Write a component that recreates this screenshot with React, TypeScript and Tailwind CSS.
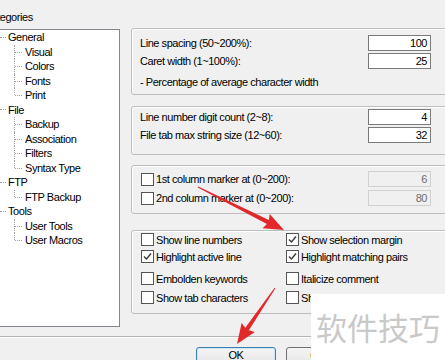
import React from "react";

type Root = { label: string; children: string[] };

const tree: Root[] = [
  { label: "General", children: ["Visual", "Colors", "Fonts", "Print"] },
  { label: "File", children: ["Backup", "Association", "Filters", "Syntax Type"] },
  { label: "FTP", children: ["FTP Backup"] },
  { label: "Tools", children: ["User Tools", "User Macros"] },
];

function arrowPoints(x0: number, y0: number, x1: number, y1: number, h = 18, hw = 8, w1 = 2.2, w0 = 0.5) {
  const dx = x1 - x0;
  const dy = y1 - y0;
  const L = Math.hypot(dx, dy);
  const ux = dx / L;
  const uy = dy / L;
  const nx = -uy;
  const ny = ux;
  const p = (a: number, b: number) => `${x0 + ux * a + nx * b},${y0 + uy * a + ny * b}`;
  return [p(0, -w0), p(L - h, -w1), p(L - h - 2, -hw), p(L, 0), p(L - h - 2, hw), p(L - h, w1), p(0, w0)].join(" ");
}

function CheckBox({ checked }: { checked?: boolean }) {
  return (
    <span className="flex h-[13px] w-[13px] shrink-0 items-center justify-center border border-[#555555] bg-white">
      {checked && (
        <svg width="11" height="11" viewBox="0 0 11 11">
          <polyline points="2,5.5 4.5,8 9,2.5" fill="none" stroke="#3a3a3a" strokeWidth="1.4" />
        </svg>
      )}
    </span>
  );
}

function Field({ value, disabled }: { value: string; disabled?: boolean }) {
  return (
    <div
      className={
        disabled
          ? "flex h-[16px] w-[63px] items-center justify-end border border-[#d0d0d0] bg-[#f0f0f0] pr-[3px] text-[#6d6d6d]"
          : "flex h-[16px] w-[63px] items-center justify-end border border-[#7a7a7a] bg-white pr-[3px] text-black"
      }
    >
      {value}
    </div>
  );
}

function NumRow({ label, value }: { label: string; value: string }) {
  return (
    <div className="flex h-[18px] items-center">
      <div className="w-[228px] whitespace-nowrap">{label}</div>
      <Field value={value} />
    </div>
  );
}

function CheckItem({ label, checked }: { label: string; checked?: boolean }) {
  return (
    <div className="flex h-[17px] items-center gap-[2px] whitespace-nowrap">
      <CheckBox checked={checked} />
      <span>{label}</span>
    </div>
  );
}

const panel = "rounded-[3px] border border-[#bdbdbd] shadow-[inset_1px_1px_0_#ffffff]";

export default function App() {
  return (
    <div className="relative h-[360px] w-[445px] overflow-hidden bg-[#f0f0f0] font-['Liberation_Sans',Arial,sans-serif] text-[11px] leading-[14px] tracking-[-0.45px] text-black">
      <div className="flex h-[336px]">
        {/* left column */}
        <div className="ml-[-30px] flex w-[150px] shrink-0 flex-col">
          <div className="mt-[10px] h-[14px] pl-[14px]">Categories</div>
          <div className="mt-[5px] h-[298px] border border-[#828790] bg-white">
            <div className="ml-[29px] flex flex-col">
              {tree.map((r) => (
                <div key={r.label} className="flex flex-col">
                  <div className="flex h-[14.5px] items-center">
                    <span className="ml-[-9px] h-[9px] w-[9px] shrink-0 border border-[#a0a0a0] bg-white" />
                    <span className="w-[6px] shrink-0 border-t border-dotted border-[#a0a0a0]" />
                    <span className="ml-[2px] whitespace-nowrap">{r.label}</span>
                  </div>
                  {r.children.map((c, i) => {
                    const last = i === r.children.length - 1;
                    return (
                      <div key={c} className="flex h-[14.5px] items-center">
                        <div className="relative ml-[14px] h-full w-[9px] shrink-0">
                          <span
                            className={
                              last
                                ? "absolute left-0 top-0 h-1/2 border-l border-dotted border-[#a0a0a0]"
                                : "absolute left-0 top-0 h-full border-l border-dotted border-[#a0a0a0]"
                            }
                          />
                          <span className="absolute left-[1px] top-1/2 w-[7px] border-t border-dotted border-[#a0a0a0]" />
                        </div>
                        <span className="ml-[2px] whitespace-nowrap">{c}</span>
                      </div>
                    );
                  })}
                </div>
              ))}
            </div>
          </div>
        </div>

        {/* right column */}
        <div className="ml-[11px] flex w-[330px] shrink-0 flex-col pt-[28px]">
          <div className={`${panel} h-[67px] pl-[8px] pt-[5px]`}>
            <NumRow label="Line spacing (50~200%):" value="100" />
            <NumRow label="Caret width (1~100%):" value="25" />
            <div className="mt-[3px] flex h-[18px] items-center">- Percentage of average character width</div>
          </div>
          <div className={`${panel} mt-[11px] h-[49px] pl-[8px] pt-[1px]`}>
            <NumRow label="Line number digit count (2~8):" value="4" />
            <NumRow label="File tab max string size (12~60):" value="32" />
          </div>
          <div className={`${panel} mt-[10px] h-[49px] pl-[9px] pt-[4px]`}>
            <div className="flex h-[18px] items-center">
              <div className="flex w-[227px] items-center gap-[2px] whitespace-nowrap">
                <CheckBox />
                <span>1st column marker at (0~200):</span>
              </div>
              <Field value="6" disabled />
            </div>
            <div className="mt-[1px] flex h-[18px] items-center">
              <div className="flex w-[227px] items-center gap-[2px] whitespace-nowrap">
                <CheckBox />
                <span>2nd column marker at (0~200):</span>
              </div>
              <Field value="80" disabled />
            </div>
          </div>
          <div className={`${panel} mt-[16px] h-[84px] pl-[9px]`}>
            <div className="grid grid-cols-[145px_1fr]">
              <CheckItem label="Show line numbers" />
              <CheckItem label="Show selection margin" checked />
              <CheckItem label="Highlight active line" checked />
              <CheckItem label="Highlight matching pairs" checked />
            </div>
            <div className="mt-[5px] grid grid-cols-[145px_1fr] gap-y-[2px]">
              <CheckItem label="Embolden keywords" />
              <CheckItem label="Italicize comment" />
              <CheckItem label="Show tab characters" />
              <CheckItem label="Show fold markers" />
            </div>
          </div>
        </div>
      </div>

      {/* separator */}
      <div className="h-[1px] bg-[#b4b4b4]" />
      <div className="h-[1px] bg-white" />

      {/* buttons */}
      <div className="flex pl-[196px] pt-[9px]">
        <div className="flex h-[24px] w-[80px] justify-center rounded-[3px] border border-[#3c7fb1] bg-gradient-to-b from-[#f4f4f4] to-[#e2e2e2] pt-[1px] leading-[13px] shadow-[inset_0_0_0_1px_#c9e6f7]">
          OK
        </div>
        <div className="ml-[10px] flex h-[24px] w-[80px] justify-center rounded-[3px] border border-[#707070] bg-gradient-to-b from-[#f4f4f4] to-[#e2e2e2] pt-[1px] leading-[13px]">
          Cancel
        </div>
      </div>

      {/* watermark */}
      <div className="absolute left-[311px] top-[294px] flex h-[66px] w-[134px] items-center bg-white pl-[5px] font-['Noto_Sans_CJK_SC',sans-serif] text-[31px] leading-[34px] tracking-normal text-[#c9c9c9]">
        软件技巧
      </div>

      {/* annotation arrows */}
      <svg className="pointer-events-none absolute left-0 top-0" width="445" height="360" viewBox="0 0 445 360">
        <polygon points={arrowPoints(198, 187, 284, 230)} fill="#e3282b" />
        <polygon points={arrowPoints(275, 288, 237, 344)} fill="#e3282b" />
      </svg>
    </div>
  );
}
